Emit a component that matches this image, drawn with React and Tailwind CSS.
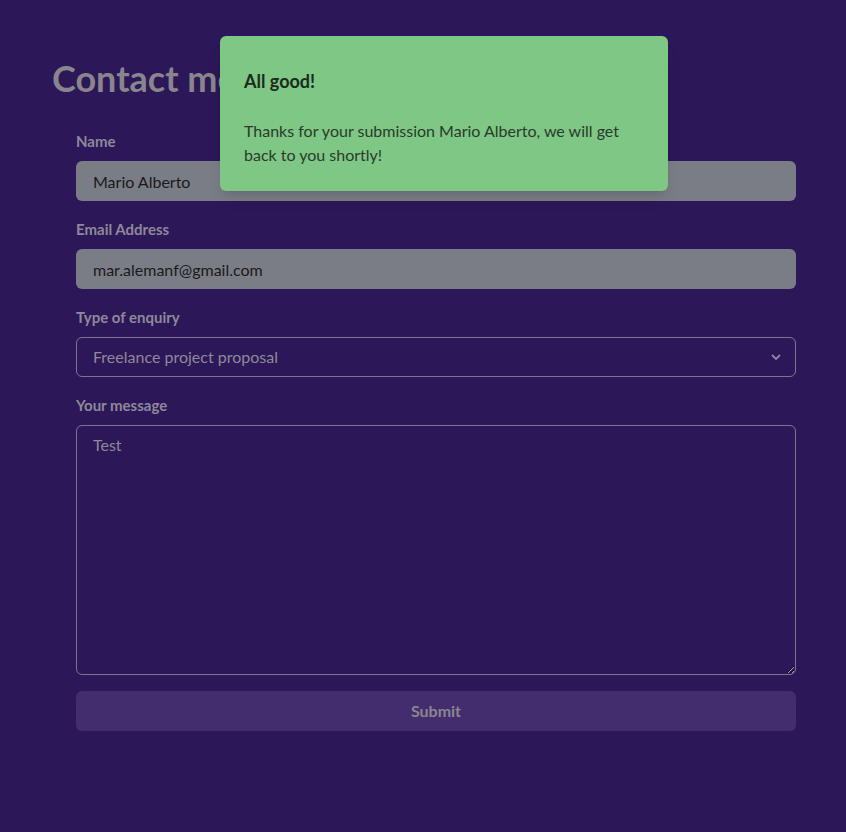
export default function App() {
  return (
    <div className="min-h-[832px] w-full bg-[#2c1758] font-['Lato','Liberation_Sans',sans-serif] relative">
      <div className="pl-[52px] pr-[50px] pt-[55px]">
        <h1 className="text-[36px] font-bold leading-[46px] text-[#88868c]">Contact me</h1>

        <form className="mt-[29px] ml-[24px] flex flex-col">
          <label className="text-[15px] font-bold text-[#8e899a] leading-[22px] mb-[9px]">Name</label>
          <input
            type="text"
            readOnly
            defaultValue="Mario Alberto"
            className="h-10 rounded-md bg-[#7a7d86] pl-[17px] pr-4 text-[16px] text-[#1a1a1a] outline-none"
          />

          <label className="mt-[17px] text-[15px] font-bold text-[#8e899a] leading-[22px] mb-[9px]">Email Address</label>
          <input
            type="email"
            readOnly
            defaultValue="mar.alemanf@gmail.com"
            className="h-10 rounded-md bg-[#7a7d86] pl-[17px] pr-4 text-[16px] text-[#1a1a1a] outline-none"
          />

          <label className="mt-[17px] text-[15px] font-bold text-[#8e899a] leading-[22px] mb-[9px]">Type of enquiry</label>
          <div className="relative">
            <select className="h-10 w-full appearance-none rounded-md border border-[#7d7590] bg-transparent pl-4 pr-8 text-[16px] text-[#8e899a] outline-none">
              <option>Freelance project proposal</option>
            </select>
            <svg className="pointer-events-none absolute right-[14px] top-[15px] h-[10px] w-[12px] text-[#8e899a]" viewBox="0 0 12 10" fill="none">
              <path d="M2 3l4 4 4-4" stroke="currentColor" strokeWidth="1.8" />
            </svg>
          </div>

          <label className="mt-[17px] text-[15px] font-bold text-[#8e899a] leading-[22px] mb-[9px]">Your message</label>
          <textarea
            readOnly
            defaultValue="Test"
            className="h-[250px] rounded-md border border-[#7d7590] bg-transparent px-4 py-[7px] text-[16px] text-[#8e899a] outline-none"
          />

          <button type="button" className="mt-4 h-10 rounded-md bg-[#432d6e] text-[16px] font-bold text-[#8a8690]">
            Submit
          </button>
        </form>
      </div>

      {/* toast */}
      <div className="absolute left-[220px] top-[36px] w-[448px] rounded-md bg-[#7fc784] px-6 pt-[30px] pb-[24px] shadow-lg">
        <p className="text-[18px] font-bold leading-[30px] text-[#1d2a1f]">All good!</p>
        <p className="mt-[23px] text-[16px] leading-[24px] text-[#2a3a2c]">
          Thanks for your submission Mario Alberto, we will get back to you shortly!
        </p>
      </div>
    </div>
  );
}
